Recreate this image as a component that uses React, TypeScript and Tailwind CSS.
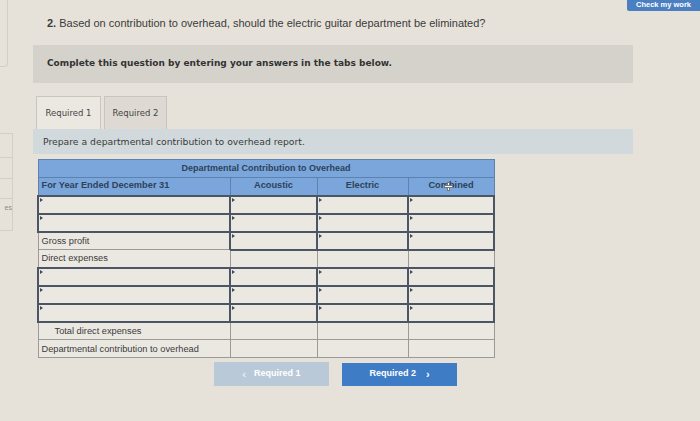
import React from 'react';

type Row = {
    label: string;
    indent?: boolean;
    labelInput: boolean;
    valueInput: boolean;
};

const rows: Row[] = [
    { label: '', labelInput: true, valueInput: true },
    { label: '', labelInput: true, valueInput: true },
    { label: 'Gross profit', labelInput: false, valueInput: true },
    { label: 'Direct expenses', labelInput: false, valueInput: false },
    { label: '', labelInput: true, valueInput: true },
    { label: '', labelInput: true, valueInput: true },
    { label: '', labelInput: true, valueInput: true },
    { label: 'Total direct expenses', indent: true, labelInput: false, valueInput: false },
    { label: 'Departmental contribution to overhead', labelInput: false, valueInput: false },
];

const Marker = () => (
    <span className="absolute left-[1px] top-[1px] w-0 h-0 border-t-[2px] border-b-[2px] border-l-[3px] border-t-transparent border-b-transparent border-l-[#3f4a5a]" />
);

const Cell: React.FC<{ input: boolean; children?: React.ReactNode; indent?: boolean }> = ({ input, children, indent }) => (
    <td
        className={
            input
                ? 'relative h-[18px] p-0 border-2 border-[#4b5563] bg-[#ebe8e2]'
                : 'relative h-[18px] p-0 border border-[#9b9a96] bg-[#ebe8e2]'
        }
    >
        {input && <Marker />}
        {children && (
            <span className={`block text-[9.25px] text-[#3a3a3a] leading-[16px] whitespace-nowrap ${indent ? 'pl-[16px]' : 'pl-[3px]'}`}>
                {children}
            </span>
        )}
    </td>
);

export default function App() {
    return (
        <div className="relative w-[700px] h-[421px] overflow-hidden bg-[#e6e2da] flex font-['Liberation_Sans',Arial,sans-serif]">
            {/* left sidebar fragment */}
            <div className="w-[13px] shrink-0 flex flex-col">
                <div className="w-[8px] h-[67px] border-r border-b border-[#d3cfc7] rounded-br-[4px]" />
                <div className="mt-[66px] w-[13px] flex flex-col border-r border-t border-[#d3cfc7]">
                    <div className="h-[24px] border-b border-[#d3cfc7]" />
                    <div className="h-[21px] border-b border-[#d3cfc7]" />
                    <div className="h-[20px] border-b border-[#d3cfc7]" />
                    <div className="h-[32px] border-b border-[#d3cfc7] text-[7px] text-[#8a8a88] leading-none text-right pt-[5px] overflow-hidden whitespace-nowrap">
                        es
                    </div>
                </div>
            </div>

            {/* main column */}
            <div className="ml-[20px] w-[600px] shrink-0 flex flex-col">
                <p className="mt-[17px] pl-[14px] text-[11px] leading-[13px] text-[#3b3b3b] whitespace-nowrap">
                    <span className="font-bold">2.</span> Based on contribution to overhead, should the electric guitar department be eliminated?
                </p>

                <div className="mt-[15px] h-[38px] bg-[#d5d2cc] flex items-center pl-[14px]">
                    <span className="font-['DejaVu_Sans',Verdana,sans-serif] font-bold text-[9px] text-[#333333]">
                        Complete this question by entering your answers in the tabs below.
                    </span>
                </div>

                <div className="mt-[13px] flex items-start pl-[3px] gap-[3px]">
                    <div className="w-[65px] h-[34px] bg-[#ebe8e2] border border-b-0 border-[#cac6bf] flex items-center justify-center text-[8.5px] text-[#444444] font-['DejaVu_Sans',Verdana,sans-serif] -mb-[1px]">
                        Required 1
                    </div>
                    <div className="w-[63px] h-[33px] bg-[#dedad3] border border-b-0 border-[#c9c5be] flex items-center justify-center text-[8.5px] text-[#444444] font-['DejaVu_Sans',Verdana,sans-serif]">
                        Required 2
                    </div>
                </div>

                <div className="h-[25px] bg-[#d1d9dc] flex items-center pl-[10px]">
                    <span className="font-['DejaVu_Sans',Verdana,sans-serif] text-[9.25px] text-[#3a3a3a]">
                        Prepare a departmental contribution to overhead report.
                    </span>
                </div>

                <div className="mt-[5px] pl-[4px]">
                    <table className="border-collapse table-fixed w-[456px]">
                        <colgroup>
                            <col className="w-[192px]" />
                            <col className="w-[87px]" />
                            <col className="w-[91px]" />
                            <col className="w-[86px]" />
                        </colgroup>
                        <thead>
                            <tr>
                                <th
                                    colSpan={4}
                                    className="h-[18px] p-0 bg-[#7aa6db] border border-[#5c83b0] text-center text-[9px] font-bold text-[#2e4258]"
                                >
                                    Departmental Contribution to Overhead
                                </th>
                            </tr>
                            <tr>
                                <th className="h-[18px] p-0 pl-[3px] bg-[#7aa6db] border border-[#5c83b0] text-left text-[9.25px] font-bold text-[#2e4258]">
                                    For Year Ended December 31
                                </th>
                                <th className="h-[18px] p-0 bg-[#7aa6db] border border-[#5c83b0] text-center text-[9.25px] font-bold text-[#2e4258]">
                                    Acoustic
                                </th>
                                <th className="h-[18px] p-0 bg-[#7aa6db] border border-[#5c83b0] text-center text-[9.25px] font-bold text-[#2e4258]">
                                    Electric
                                </th>
                                <th className="relative h-[18px] p-0 bg-[#7aa6db] border border-[#5c83b0] text-center text-[9.25px] font-bold text-[#2e4258]">
                                    Combined
                                    <span className="absolute left-[35px] top-[4px] w-[9px] h-[9px]">
                                        <span className="absolute left-[3px] top-0 w-[3px] h-[9px] bg-white border border-[#777]" />
                                        <span className="absolute left-0 top-[3px] w-[9px] h-[3px] bg-white border border-[#777]" />
                                    </span>
                                </th>
                            </tr>
                        </thead>
                        <tbody>
                            {rows.map((r, i) => (
                                <tr key={i}>
                                    <Cell input={r.labelInput} indent={r.indent}>
                                        {r.label}
                                    </Cell>
                                    <Cell input={r.valueInput} />
                                    <Cell input={r.valueInput} />
                                    <Cell input={r.valueInput} />
                                </tr>
                            ))}
                        </tbody>
                    </table>
                </div>

                <div className="mt-[4px] pl-[181px] flex items-center gap-[13px]">
                    <button className="w-[115px] h-[24px] bg-[#bac9d8] text-white text-[9px] font-bold flex items-center justify-center gap-[8px]">
                        <span className="text-[10px] font-normal">‹</span>
                        <span>Required 1</span>
                    </button>
                    <button className="w-[115px] h-[23px] bg-[#3f7cc6] text-white text-[9px] font-bold flex items-center justify-center gap-[10px]">
                        <span>Required 2</span>
                        <span className="text-[11px]">›</span>
                    </button>
                </div>
            </div>

            {/* header button, partly off screen */}
            <div className="absolute right-0 top-0 w-[73px] h-[11px] bg-[#4a7fc1] rounded-bl-[2px] pl-[9px] text-white text-[7.5px] font-bold whitespace-nowrap overflow-hidden leading-[10px]">
                Check my work
            </div>
        </div>
    );
}
